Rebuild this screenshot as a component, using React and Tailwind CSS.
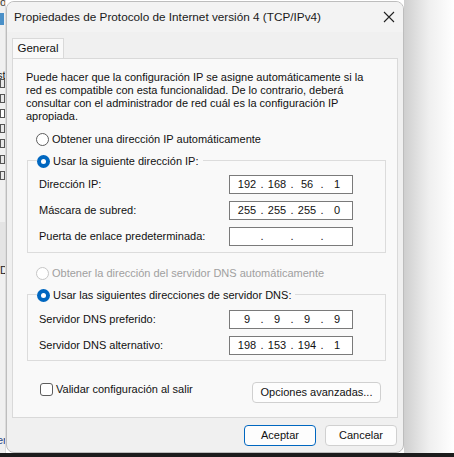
import React from "react";

const font = { fontFamily: '"Liberation Sans", Arial, sans-serif' };

function Radio({ checked, disabled }) {
  if (checked) {
    return (
      <span className="flex items-center justify-center w-[13px] h-[13px] rounded-full bg-[#0067c0] shrink-0">
        <span className="w-[5px] h-[5px] rounded-full bg-white" />
      </span>
    );
  }
  return (
    <span
      className={
        "w-[13px] h-[13px] rounded-full border bg-white shrink-0 " +
        (disabled ? "border-[#c6c6c6]" : "border-[#5d5d5d]")
      }
    />
  );
}

function IpBox({ parts }) {
  return (
    <div className="flex items-center w-[124px] h-[19px] border border-[#7a7a7a] bg-white pl-[5px] text-[11px] text-[#111]">
      {parts.map((p, i) => (
        <React.Fragment key={i}>
          <span className="w-[24px] text-center">{p}</span>
          {i < 3 && <span className="w-[6px] text-center">.</span>}
        </React.Fragment>
      ))}
    </div>
  );
}

function Row({ label, parts }) {
  return (
    <div className="flex items-center justify-between h-[19px] pl-[11px] pr-[32px]">
      <span>{label}</span>
      <IpBox parts={parts} />
    </div>
  );
}

function Background() {
  // sliver of the window behind the dialog
  const marks = [79, 94, 109, 124, 139, 155, 171];
  return (
    <div className="relative w-[6px] h-full bg-[#f0f0f0] border-r border-[#dcdcdc] shrink-0 text-[11px] text-[#222] overflow-hidden">
      <div className="absolute top-[-6px] left-0 text-[#333]">op</div>
      <div className="absolute top-[13px] left-0 w-[4px] h-[12px] bg-[#4a90c8]" />
      <div className="absolute top-[67px] left-[-3px]">st</div>
      {marks.map((y, i) => (
        <div
          key={y}
          className={
            "absolute left-0 w-[5px] h-[9px] border border-[#555] " +
            (i === 2 ? "bg-white" : "bg-[#e8e8e8]")
          }
          style={{ top: y }}
        />
      ))}
      <div className="absolute top-[222px] left-0 w-[6px] h-[46px] bg-[#e4e4e4]" />
      <div className="absolute top-[262px] left-0">D</div>
      <div className="absolute top-[432px] left-[-3px] text-[#2a4a8a]">er</div>
    </div>
  );
}

export default function App() {
  return (
    <div className="w-[454px] h-[457px] bg-white overflow-hidden flex flex-col" style={font}>
      <div className="flex h-[453px]">
        <Background />

        {/* DIALOG */}
        <div className="mt-[1px] w-[398px] h-[452px] flex flex-col bg-[#f0f0f0] border border-[#bdbdbd] rounded-lg overflow-hidden text-[11px] text-[#111] shrink-0">
          {/* title bar */}
          <div className="flex items-center justify-between h-[30px] bg-[#f3f3f3] pl-[7px] pr-[8px]">
            <span className="text-[11.75px] text-[#1a1a1a]">
              Propiedades de Protocolo de Internet versión 4 (TCP/IPv4)
            </span>
            <svg width="12" height="12" viewBox="0 0 12 12">
              <path d="M1 1 L11 11 M11 1 L1 11" stroke="#222" strokeWidth="1.1" />
            </svg>
          </div>

          {/* tab */}
          <div className="pl-[5px] pt-[6px]">
            <div className="w-[52px] h-[21px] flex items-center justify-center bg-[#f9f9f9] border border-b-0 border-[#d9d9d9] text-[11.5px]">
              General
            </div>
          </div>

          {/* tab panel */}
          <div className="mx-[5px] h-[360px] bg-[#f9f9f9] border border-[#d9d9d9] -mt-[1px] pt-[12px] flex flex-col">
            <p className="px-[13px] leading-[13px] whitespace-nowrap">
              Puede hacer que la configuración IP se asigne automáticamente si la
              <br />
              red es compatible con esta funcionalidad. De lo contrario, deberá
              <br />
              consultar con el administrador de red cuál es la configuración IP
              <br />
              apropiada.
            </p>

            <div className="flex items-center gap-[3px] pl-[23px] mt-[9px] h-[14px]">
              <Radio />
              <span>Obtener una dirección IP automáticamente</span>
            </div>

            {/* group 1 */}
            <div className="ml-[14px] mr-[11px] mt-[14px] h-[93px] border border-[#dcdcdc] flex flex-col">
              <div className="flex items-center gap-[3px] -mt-[7px] ml-[9px] pr-[4px] bg-[#f9f9f9] self-start h-[14px]">
                <Radio checked />
                <span>Usar la siguiente dirección IP:</span>
              </div>
              <div className="flex flex-col gap-[7px] mt-[7px]">
                <Row label="Dirección IP:" parts={["192", "168", "56", "1"]} />
                <Row label="Máscara de subred:" parts={["255", "255", "255", "0"]} />
                <Row label="Puerta de enlace predeterminada:" parts={["", "", "", ""]} />
              </div>
            </div>

            <div className="flex items-center gap-[3px] pl-[23px] mt-[13px] h-[14px] text-[#a0a0a0]">
              <Radio disabled />
              <span>Obtener la dirección del servidor DNS automáticamente</span>
            </div>

            {/* group 2 */}
            <div className="ml-[14px] mr-[11px] mt-[14px] h-[67px] border border-[#dcdcdc] flex flex-col">
              <div className="flex items-center gap-[3px] -mt-[7px] ml-[9px] pr-[4px] bg-[#f9f9f9] self-start h-[14px]">
                <Radio checked />
                <span>Usar las siguientes direcciones de servidor DNS:</span>
              </div>
              <div className="flex flex-col gap-[7px] mt-[8px]">
                <Row label="Servidor DNS preferido:" parts={["9", "9", "9", "9"]} />
                <Row label="Servidor DNS alternativo:" parts={["198", "153", "194", "1"]} />
              </div>
            </div>

            <div className="flex items-start justify-between pl-[27px] pr-[16px] mt-[21px]">
              <div className="flex items-center gap-[3px] -mt-[1px]">
                <span className="w-[13px] h-[13px] rounded-[3px] border border-[#5d5d5d] bg-white" />
                <span>Validar configuración al salir</span>
              </div>
              <div className="w-[129px] h-[21px] flex items-center justify-center bg-[#fdfdfd] border border-[#d0d0d0] rounded-[4px]">
                Opciones avanzadas...
              </div>
            </div>
          </div>

          {/* footer buttons */}
          <div className="flex justify-end gap-[9px] pr-[6px] mt-[7px]">
            <div className="w-[72px] h-[21px] flex items-center justify-center bg-[#fdfdfd] border border-[#0067c0] rounded-[4px]">
              Aceptar
            </div>
            <div className="w-[72px] h-[21px] flex items-center justify-center bg-[#fdfdfd] border border-[#d0d0d0] rounded-[4px]">
              Cancelar
            </div>
          </div>
        </div>

        {/* drop shadow beside the dialog */}
        <div className="flex-1 bg-gradient-to-r from-[#cfcfcf] via-[#efefef] to-white" />
      </div>
      <div className="h-[4px] bg-[#1c1c1c]" />
    </div>
  );
}
